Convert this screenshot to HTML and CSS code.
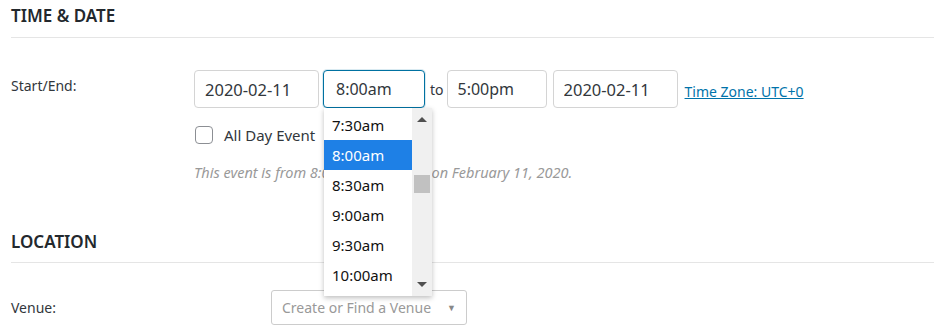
FILE: index.html
```html
<!DOCTYPE html>
<html lang="en">
<head>
  <meta charset="UTF-8">
  <title>Time &amp; Date</title>
  <link rel="stylesheet" href="styles.css">
</head>
<body>
  <div class="panel">
    <h3 class="section-title">TIME &amp; DATE</h3>

    <div class="row row-dates">
      <div class="label">Start/End:</div>
      <div class="fields">
        <input class="field date-start" type="text" value="2020-02-11">
        <span class="time-wrap">
          <input class="field time-start focused" type="text" value="8:00am">
          <!-- 下拉时间列表 -->
          <div class="time-list">
            <ul>
              <li>7:30am</li>
              <li class="selected">8:00am</li>
              <li>8:30am</li>
              <li>9:00am</li>
              <li>9:30am</li>
              <li>10:00am</li>
            </ul>
            <div class="scrollbar">
              <span class="arrow up"></span>
              <span class="thumb"></span>
              <span class="arrow down"></span>
            </div>
          </div>
        </span>
        <span class="sep">to</span>
        <input class="field time-end" type="text" value="5:00pm">
        <input class="field date-end" type="text" value="2020-02-11">
        <a class="tz-link" href="#">Time Zone: UTC+0</a>
      </div>
    </div>

    <div class="row row-allday">
      <div class="label"></div>
      <label class="allday"><span class="checkbox"></span>All Day Event</label>
    </div>

    <div class="row row-note">
      <div class="label"></div>
      <p class="note">This event is from 8:00am to 5:00pm on February 11, 2020.</p>
    </div>

    <h3 class="section-title location-title">LOCATION</h3>

    <div class="row row-venue">
      <div class="label venue-label">Venue:</div>
      <div class="venue-select">
        <span class="placeholder">Create or Find a Venue</span>
        <span class="caret">▼</span>
      </div>
    </div>
  </div>
</body>
</html>
```

FILE: styles.css
```css
body {
  margin: 0;
  background-color: #fff;
  font-family: "Noto Sans", "Open Sans", Arial, sans-serif;
  color: #32373c;
  font-size: 14px;
}

.panel {
  padding-left: 11px;
}

.section-title {
  margin: 0;
  padding: 4px 0 9px;
  font-size: 17px;
  line-height: 24px;
  font-weight: 600;
  color: #23282d;
  border-bottom: 1px solid #e5e5e5;
}

.location-title {
  margin-top: 44px;
  padding-bottom: 8px;
}

.row {
  display: flex;
  align-items: flex-start;
}

.label {
  width: 183px;
  flex: none;
  padding-top: 6px;
  line-height: 20px;
}

.row-dates {
  margin-top: 32px;
}

.fields {
  display: flex;
  align-items: center;
}

.field {
  box-sizing: border-box;
  height: 38px;
  margin: 0;
  padding: 0 10px;
  font-family: inherit;
  font-size: 16.5px;
  color: #32373c;
  border: 1px solid #d4d4d4;
  border-radius: 4px;
  background: #fff;
  outline: none;
}

.date-start { width: 125px; }
.time-start { width: 102px; padding-left: 12px; font-size: 16px; }
.time-end { width: 100px; font-size: 16px; }
.date-end { width: 125px; margin-left: 6px; }

.focused {
  border-color: #0071a1;
  box-shadow: 0 0 0 1px rgba(0, 113, 161, 0.15);
}

.time-wrap {
  position: relative;
  margin-left: 4px;
}

.sep {
  margin: 0 3px 0 5px;
  font-size: 14px;
}

.tz-link {
  margin-left: 7px;
  margin-top: 4px;
  color: #0073aa;
  font-size: 14px;
  text-decoration: underline;
}

/* 下拉列表 */
.time-list {
  position: absolute;
  top: 38px;
  left: 1px;
  width: 108px;
  height: 188px;
  background: #fff;
  box-shadow: 0 2px 5px rgba(0, 0, 0, 0.25);
  display: flex;
  overflow: hidden;
  z-index: 5;
}

.time-list ul {
  list-style: none;
  margin: 0;
  padding: 2px 0 0;
  flex: 1;
}

.time-list li {
  height: 30px;
  line-height: 30px;
  padding-left: 8px;
  font-size: 15px;
  color: #111;
}

.time-list li.selected {
  background-color: #1e80e6;
  color: #fff;
}

.scrollbar {
  width: 20px;
  flex: none;
  background: #f0f0f0;
  position: relative;
}

.scrollbar .arrow {
  position: absolute;
  left: 5px;
  width: 0;
  height: 0;
  border-left: 5px solid transparent;
  border-right: 5px solid transparent;
}

.scrollbar .arrow.up {
  top: 9px;
  border-bottom: 5px solid #505050;
}

.scrollbar .arrow.down {
  bottom: 9px;
  border-top: 5px solid #505050;
}

.scrollbar .thumb {
  position: absolute;
  left: 2px;
  top: 67px;
  width: 16px;
  height: 18px;
  background: #c1c1c1;
}

.row-allday {
  margin-top: 18px;
}

.allday {
  display: flex;
  align-items: center;
  font-size: 15px;
  line-height: 18px;
  color: #32373c;
}

.checkbox {
  box-sizing: border-box;
  width: 18px;
  height: 18px;
  margin: 0 11px 0 1px;
  border: 1px solid #8c8f94;
  border-radius: 4px;
  background: #fff;
}

.row-note {
  margin-top: 18px;
}

.note {
  margin: 0;
  font-size: 14.5px;
  line-height: 20px;
  font-style: italic;
  color: #999;
}

.row-venue {
  margin-top: 27px;
  align-items: center;
}

.venue-label {
  width: 260px;
  padding-top: 0;
}

.venue-select {
  box-sizing: border-box;
  width: 196px;
  height: 35px;
  padding: 0 10px;
  border: 1px solid #ccc;
  border-radius: 3px;
  display: flex;
  align-items: center;
  justify-content: space-between;
  font-size: 14px;
  color: #999;
}

.caret {
  font-size: 9px;
  color: #888;
}
```
